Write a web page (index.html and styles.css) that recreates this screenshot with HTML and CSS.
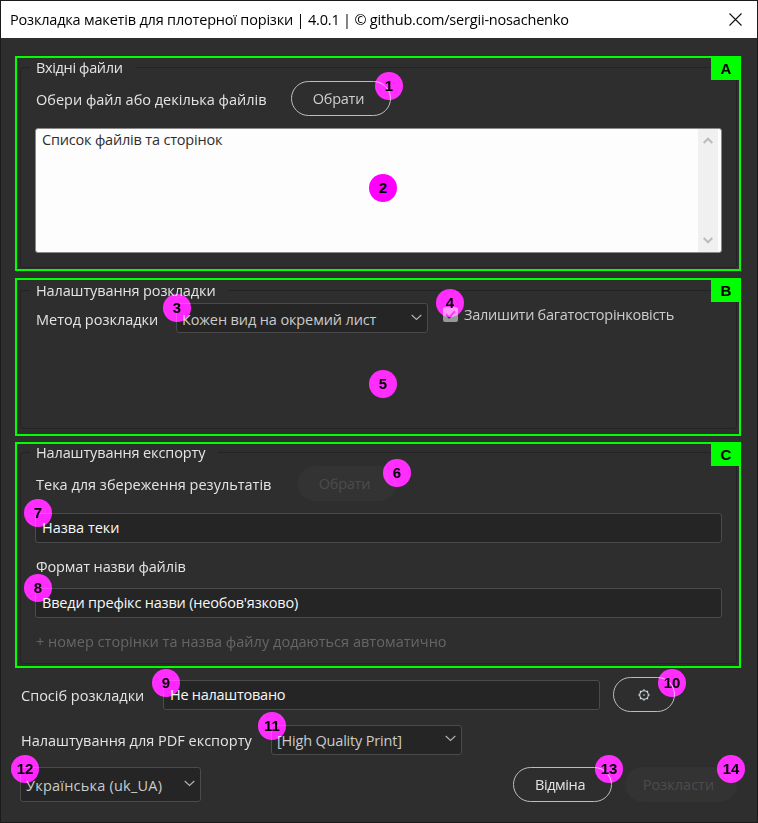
FILE: index.html
```
<!DOCTYPE html>
<html lang="uk">
<head>
<meta charset="utf-8">
<title>Розкладка макетів</title>
<link rel="stylesheet" href="styles.css">
</head>
<body>
<div class="window">
  <header class="titlebar">
    <span>Розкладка макетів для плотерної порізки | 4.0.1 | © github.com/sergii-nosachenko</span>
    <svg class="close" width="13" height="13" viewBox="0 0 13 13"><path d="M.5.5l12 12M12.5.5l-12 12"/></svg>
  </header>
  <main class="content">
    <section class="zone zone-a">
      <span class="tag">A</span>
      <fieldset class="group">
        <legend class="ls-3">Вхідні файли</legend>
        <div class="row row-files">
          <span class="label">Обери файл або декілька файлів</span>
          <div class="btn btn-pick"><span class="ls-25">Обрати</span><i class="pin pin-1"><b>1</b></i></div>
        </div>
        <div class="list">
          <div class="list-text ls-2">Список файлів та сторінок</div>
          <div class="scroll">
            <svg width="10" height="7" viewBox="0 0 10 7"><path d="M.7 6L5 1.7 9.3 6"/></svg>
            <svg width="10" height="7" viewBox="0 0 10 7"><path d="M.7 1L5 5.3 9.3 1"/></svg>
          </div>
          <i class="pin pin-solid pin-2"><b>2</b></i>
        </div>
      </fieldset>
    </section>

    <section class="zone zone-b">
      <span class="tag">B</span>
      <fieldset class="group">
        <legend class="ls-1">Налаштування розкладки</legend>
        <div class="row row-method">
          <span class="label">Метод розкладки</span>
          <div class="field select method"><span class="ls-1">Кожен вид на окремий лист</span>
            <svg class="chev" width="11" height="7" viewBox="0 0 11 7"><path d="M.7 1l4.8 4.5L10.3 1"/></svg>
            <i class="pin pin-3"><b>3</b></i></div>
          <div class="check">
            <span class="box"><svg width="15" height="15" viewBox="0 0 15 15"><path d="M3 7.2l3.1 3.3L12 4.2"/></svg></span>
            <span class="ls-25">Залишити багатосторінковість</span>
            <i class="pin pin-4"><b>4</b></i>
          </div>
        </div>
      </fieldset>
      <i class="pin pin-5"><b>5</b></i>
    </section>

    <section class="zone zone-c">
      <span class="tag">C</span>
      <fieldset class="group">
        <legend class="ls-1">Налаштування експорту</legend>
        <div class="row row-folder">
          <span class="label">Тека для збереження результатів</span>
          <div class="btn btn-pick off"><span class="ls-25">Обрати</span><i class="pin pin-6"><b>6</b></i></div>
        </div>
        <div class="field input folder"><span>Назва теки</span><i class="pin pin-7"><b>7</b></i></div>
        <div class="caption ls-1">Формат назви файлів</div>
        <div class="field input"><span class="ls-2">Введи префікс назви (необов'язково)</span><i class="pin pin-7"><b>8</b></i></div>
        <div class="hint">+ номер сторінки та назва файлу додаються автоматично</div>
      </fieldset>
    </section>

    <div class="row row-way">
      <span class="label">Спосіб розкладки</span>
      <div class="field input way"><span class="ls-25">Не налаштовано</span><i class="pin pin-9"><b>9</b></i></div>
      <div class="btn btn-gear">
        <svg width="12" height="12" viewBox="0 0 12 12"><circle cx="6" cy="6" r="4.3"/><path class="teeth" d="M6 .2v1.600M6 10.200v1.600M.2 6h1.600M10.200 6h1.600M2 2l1 1M9 9l1 1M10 2L9 3M3 9l-1 1"/><circle class="dot" cx="6" cy="6" r=".8"/></svg>
        <i class="pin pin-10"><b>10</b></i>
      </div>
    </div>
    <div class="row row-pdf">
      <span class="label">Налаштування для PDF експорту</span>
      <div class="field select pdf"><span class="ls-2">[High Quality Print]</span>
        <svg class="chev" width="11" height="7" viewBox="0 0 11 7"><path d="M.7 1l4.8 4.5L10.3 1"/></svg>
        <i class="pin pin-11"><b>11</b></i></div>
    </div>
    <div class="row row-foot">
      <div class="field select lang"><span class="wide">Українська (uk_UA)</span>
        <svg class="chev" width="11" height="7" viewBox="0 0 11 7"><path d="M.7 1l4.8 4.5L10.3 1"/></svg>
        <i class="pin pin-12"><b>12</b></i></div>
      <div class="btn btn-cancel"><span class="ls-4">Відміна</span><i class="pin pin-13"><b>13</b></i></div>
      <div class="btn btn-run off"><span>Розкласти</span><i class="pin pin-14"><b>14</b></i></div>
    </div>
  </main>
</div>
</body>
</html>
```
FILE: styles.css
```
* { box-sizing: border-box; }
body {
  margin: 0;
  font: 14.5px/18px "Open Sans", "Noto Sans", sans-serif;
  color: #e4e4e4;
  background: #2e2e2e;
}
.window { height: 823px; border: 1px solid #1b1b1b; background: #2e2e2e; }
.titlebar {
  height: 37px;
  padding: 0 15px 0 9px;
  display: flex;
  align-items: center;
  justify-content: space-between;
  background: #fff;
  color: #000;
  letter-spacing: -.19px;
}
.close { margin-top: -1px; }
.close path { stroke: #111; stroke-width: 1.1; fill: none; }
.content { padding: 18px 16px 0 14px; }

/* Letter-spacing steps */
.ls-1 { letter-spacing: -.12px; }
.ls-2 { letter-spacing: -.19px; }
.ls-25 { letter-spacing: -.26px; }
.ls-3 { letter-spacing: -.35px; }
.ls-4 { letter-spacing: -.4px; }
.wide { letter-spacing: .22px; }

/* Outlined zones */
.zone { position: relative; border: 2px solid #0f0; padding: 0 2px 0 3px; display: flow-root; }
.zone-a { height: 215px; margin-bottom: 7px; }
.zone-b { height: 158px; margin-bottom: 6px; }
.zone-c { height: 226px; }
.tag {
  position: absolute;
  top: -2px;
  right: -2px;
  width: 30px;
  height: 24px;
  background: #0f0;
  color: #000;
  font: bold 15px/25px "Liberation Sans", sans-serif;
  text-align: center;
}
.group { margin: 0; padding: 0 14px; border: 1px solid #232323; border-radius: 3px; }
.group legend { margin-left: -5px; padding: 1px 13px 0 6px; line-height: 16px; }
.zone-a .group { margin-top: 1px; height: 209px; }
.zone-b .group { margin-top: 2px; height: 147px; }
.zone-c .group { height: 220px; }

.row { display: flex; align-items: center; }
.label { flex: none; padding: 2px 0 0 1px; }
.row-files { margin-top: 5px; }
.row-files .label { width: 256px; }
.row-method { margin-top: 4px; }
.row-method .label { width: 141px; padding-top: 4px; }
.row-folder { margin-top: 5px; }
.row-folder .label { width: 262px; }
.row-way { margin: 9px 3px 0 5px; }
.row-way .label { width: 143px; }
.row-pdf { margin: 13px 3px 0 5px; }
.row-pdf .label { width: 251px; }
.row-foot { margin: 12px 4px 0 5px; }

/* Buttons */
.btn {
  position: relative;
  height: 35px;
  display: flex;
  align-items: center;
  justify-content: center;
  padding: 1px 5px 0 0;
  border: 1px solid #bdbdbd;
  border-radius: 18px;
  color: #cfcfcf;
}
.btn-pick { width: 100px; }
.btn.off { background: #333; border-color: #333; color: #4c4c4c; }
.btn-gear { width: 62px; margin-left: 13px; padding-right: 1px; }
.btn-gear circle, .btn-gear .teeth { fill: none; stroke: #d5dde0; stroke-width: 1.1; }
.btn-gear .dot { fill: #d5dde0; stroke: none; }
.btn-cancel { width: 99px; margin-left: auto; color: #e4e4e4; }
.btn-run { width: 112px; margin-left: 13px; }

/* File list */
.list {
  position: relative;
  height: 125px;
  margin-top: 12px;
  display: flex;
  justify-content: space-between;
  padding: 2px 3px 0 6px;
  border: 1px solid #8a8a8a;
  border-radius: 3px;
  background: #fdfdfd;
  color: #2e2e2e;
}
.scroll {
  width: 20px;
  margin-top: -2px;
  padding: 8px 0;
  display: flex;
  flex-direction: column;
  align-items: center;
  justify-content: space-between;
  background: #f0f0f0;
}
.scroll path { fill: none; stroke: #bcbcbc; stroke-width: 2; }

/* Fields */
.field {
  position: relative;
  height: 30px;
  display: flex;
  align-items: center;
  justify-content: space-between;
  padding: 0 6px;
  border: 1px solid #4b4b4b;
  border-radius: 3px;
  background: #252525;
}
.input { color: #f8f8f8; }
.select { color: #cbcbcb; padding: 3px 5px 0; }
.chev { margin-top: -4px; flex: none; }
.chev path { fill: none; stroke: #b4b4b4; stroke-width: 1.1; }
.method { width: 252px; }
.folder { margin-top: 12px; }
.way { width: 437px; }
.pdf { width: 191px; padding-top: 1px; }
.lang { width: 181px; height: 35px; padding-top: 2px; }
.caption { height: 45px; padding-left: 1px; line-height: 47px; }
.hint { padding-left: 1px; margin-top: 15px; color: #666; letter-spacing: .03px; }

.check { position: relative; display: flex; align-items: center; margin: -7px 0 0 15px; color: #cdcdcd; }
.box { width: 15px; height: 15px; margin-right: 6px; border-radius: 2px; background: #999; display: flex; }
.box path { fill: none; stroke: #3a3a3a; stroke-width: 2; }

/* Numbered pins */
.pin {
  position: absolute;
  width: 28px;
  height: 28px;
  text-align: center;
  color: #000;
  letter-spacing: 0;
}
.pin::before {
  content: "";
  position: absolute;
  inset: 0;
  border-radius: 50%;
  background: #f0f;
  mix-blend-mode: screen;
}
.pin-solid::before { mix-blend-mode: normal; }
.pin b { position: relative; font: bold 15px/28px "Liberation Sans", sans-serif; }
.pin-1 { left: 83px; top: -10px; }
.pin-2 { left: 333px; top: 45px; }
.pin-3 { left: -14px; top: -10px; }
.pin-4 { left: -7px; top: -17px; }
.pin-5 { left: 352px; top: 90px; }
.pin-6 { left: 85px; top: -8px; }
.pin-7 { left: -12px; top: -15px; }
.pin-9 { left: -12px; top: -12px; }
.pin-10 { left: 44px; top: -9px; }
.pin-11 { left: -14px; top: -14px; }
.pin-12 { left: -10px; top: -13px; }
.pin-13 { left: 81px; top: -13px; }
.pin-14 { left: 91px; top: -13px; }
```
